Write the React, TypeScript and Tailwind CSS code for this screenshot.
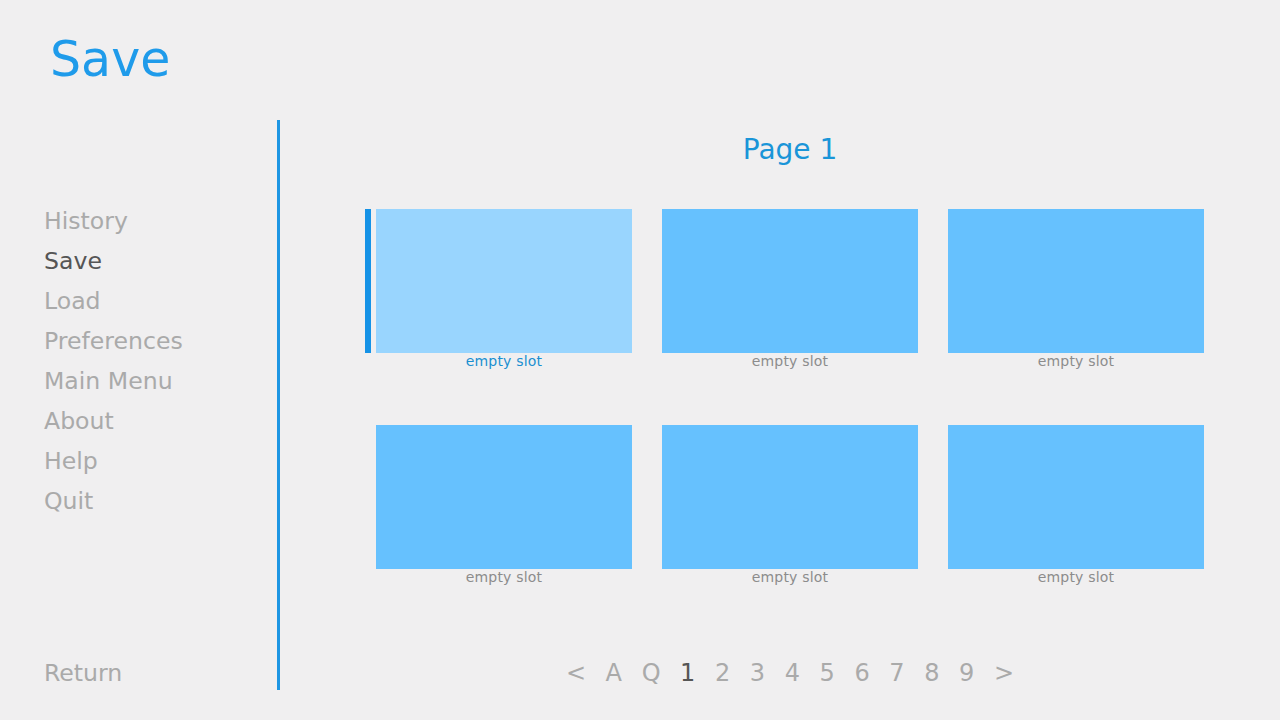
import React from "react";

const navItems = [
  { label: "History", selected: false },
  { label: "Save", selected: true },
  { label: "Load", selected: false },
  { label: "Preferences", selected: false },
  { label: "Main Menu", selected: false },
  { label: "About", selected: false },
  { label: "Help", selected: false },
  { label: "Quit", selected: false },
];

const pages = ["<", "A", "Q", "1", "2", "3", "4", "5", "6", "7", "8", "9", ">"];

function Slot({ hovered }: { hovered?: boolean }) {
  return (
    <div className="relative flex flex-col items-center w-[256px]">
      {hovered && (
        <div className="absolute left-[-11px] top-0 w-[6px] h-[144px] bg-[#1592e6]" />
      )}
      <div className={`w-[256px] h-[144px] ${hovered ? "bg-[#99d5fe]" : "bg-[#66c1fe]"}`} />
      <div
        className={`pt-[1px] text-[14px] leading-[14px] tracking-[0.2px] ${hovered ? "text-[#1a8fd0]" : "text-[#8c8c8c]"}`}
      >
        empty slot
      </div>
    </div>
  );
}

export default function App() {
  return (
    <div
      className="w-[1280px] h-[720px] overflow-hidden bg-[#f0eff0] flex flex-col"
      style={{ fontFamily: '"DejaVu Sans", "Liberation Sans", sans-serif' }}
    >
      <div className="h-[120px] pt-[31px] pl-[50px]">
        <div className="text-[49px] leading-[58px] text-[#1f9bea]">Save</div>
      </div>
      <div className="flex flex-row items-start">
        <div className="w-[277px] pl-[44px] pt-[81px] flex flex-col">
          {navItems.map((n) => (
            <div
              key={n.label}
              className={`text-[23.6px] leading-[40px] ${n.selected ? "text-[#555555]" : "text-[#aaaaaa]"}`}
            >
              {n.label}
            </div>
          ))}
          <div className="mt-[132px] text-[23.6px] leading-[40px] text-[#aaaaaa]">Return</div>
        </div>
        <div className="w-[3px] h-[570px] bg-[#1e96e3]" />
        <div className="flex-1 pl-[96px]">
          <div className="w-[828px] flex flex-col items-center pt-[14px]">
            <div className="text-[28px] leading-[32px] text-[#1a95d8]">Page 1</div>
            <div className="mt-[43px] grid grid-cols-3 gap-x-[30px] gap-y-[57px]">
              <Slot hovered />
              <Slot />
              <Slot />
              <Slot />
              <Slot />
              <Slot />
            </div>
            <div className="mt-[75px] flex flex-row">
              {pages.map((p, i) => (
                <div
                  key={i}
                  className={`px-[9.8px] text-[24px] leading-[28px] ${p === "1" ? "text-[#555555]" : "text-[#aaaaaa]"}`}
                >
                  {p}
                </div>
              ))}
            </div>
          </div>
        </div>
      </div>
    </div>
  );
}
